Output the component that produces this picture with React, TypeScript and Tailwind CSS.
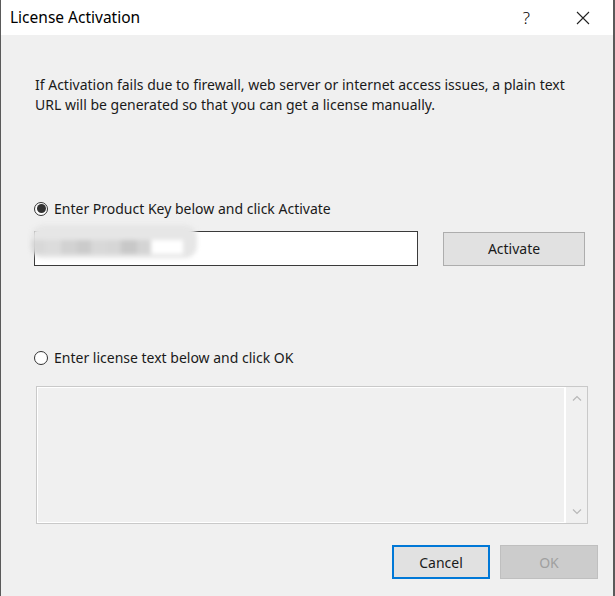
import React from "react";

const font = { fontFamily: '"Noto Sans", "Open Sans", sans-serif' };

const Radio = ({ checked }: { checked?: boolean }) => (
  <span className="flex h-[14px] w-[14px] items-center justify-center rounded-full border border-[#333] bg-white">
    {checked && <span className="h-[9px] w-[9px] rounded-full bg-[#333]" />}
  </span>
);

export default function App() {
  return (
    <div
      className="flex h-[596px] w-[615px] flex-col border-l border-r-2 border-[#5a5a5a] bg-[#f0f0f0] text-[14px] text-[#1a1a1a]"
      style={font}
    >
      {/* title bar */}
      <div className="flex h-[35px] shrink-0 items-center bg-white pl-[9px]">
        <span className="text-[15.5px] text-black">License Activation</span>
        <span className="ml-auto mr-[46px] text-[17px] font-light text-black">?</span>
        <svg width="14" height="14" viewBox="0 0 14 14" className="mr-[23px]">
          <path d="M1 1 L13 13 M13 1 L1 13" stroke="#222" strokeWidth="1.1" />
        </svg>
      </div>

      <div className="flex flex-1 flex-col pl-[34px] pr-[27px]">
        <p className="mt-[40px] leading-[20px]">
          If Activation fails due to firewall, web server or internet access issues, a plain text URL will be
          generated so that you can get a license manually.
        </p>

        <label className="mt-[83px] -ml-px flex items-center gap-[6px]">
          <Radio checked />
          <span>Enter Product Key below and click Activate</span>
        </label>

        <div className="mt-[12px] -ml-px flex items-center">
          <div className="relative h-[35px] w-[384px] border border-[#3a3a3a] bg-white">
            {/* blurred product key */}
            <div className="absolute -left-[4px] -top-[7px] flex h-[33px] w-[166px] overflow-hidden rounded-[12px] bg-[#e6e6e6] blur-[2px]">
              <span className="mt-[15px] h-[14px] w-[14px] bg-[#d8d8d8]" />
              <span className="mt-[15px] h-[14px] w-[16px] bg-[#dcdcdc]" />
              <span className="mt-[15px] h-[14px] w-[16px] bg-[#d2d2d2]" />
              <span className="mt-[15px] h-[14px] w-[14px] bg-[#cbcbcb]" />
              <span className="mt-[15px] h-[14px] w-[16px] bg-[#d8d8d8]" />
              <span className="mt-[15px] h-[14px] w-[14px] bg-[#d6d6d6]" />
              <span className="mt-[15px] h-[14px] w-[16px] bg-[#c8c8c8]" />
              <span className="mt-[15px] h-[14px] w-[14px] bg-[#d4d4d4]" />
              <span className="mt-[15px] h-[14px] w-[32px] bg-white" />
            </div>
          </div>
          <button className="ml-[25px] h-[34px] w-[142px] border border-[#adadad] bg-[#e1e1e1] text-[14px]">
            Activate
          </button>
        </div>

        <label className="mt-[81px] -ml-px flex items-center gap-[6px]">
          <Radio />
          <span>Enter license text below and click OK</span>
        </label>

        <div className="mt-[18px] ml-px flex h-[138px] w-[552px] border border-[#c9c9c9]">
          <div className="flex flex-1 border border-white" />
          <div className="flex w-[22px] flex-col items-center justify-between border-l border-white py-[8px]">
            <svg width="10" height="6" viewBox="0 0 10 6">
              <path d="M1 5.5 L5 1.5 L9 5.5" stroke="#b8b8b8" strokeWidth="1.2" fill="none" />
            </svg>
            <svg width="10" height="6" viewBox="0 0 10 6">
              <path d="M1 0.5 L5 4.5 L9 0.5" stroke="#b8b8b8" strokeWidth="1.2" fill="none" />
            </svg>
          </div>
        </div>

        <div className="mt-[21px] flex justify-end gap-[10px] -mr-[12px]">
          <button className="h-[34px] w-[98px] border-2 border-[#0078d7] bg-[#e1e1e1] text-[14px]">Cancel</button>
          <button className="h-[34px] w-[98px] border border-[#bfbfbf] bg-[#cccccc] text-[14px] text-[#a0a0a0]">
            OK
          </button>
        </div>
      </div>
    </div>
  );
}
